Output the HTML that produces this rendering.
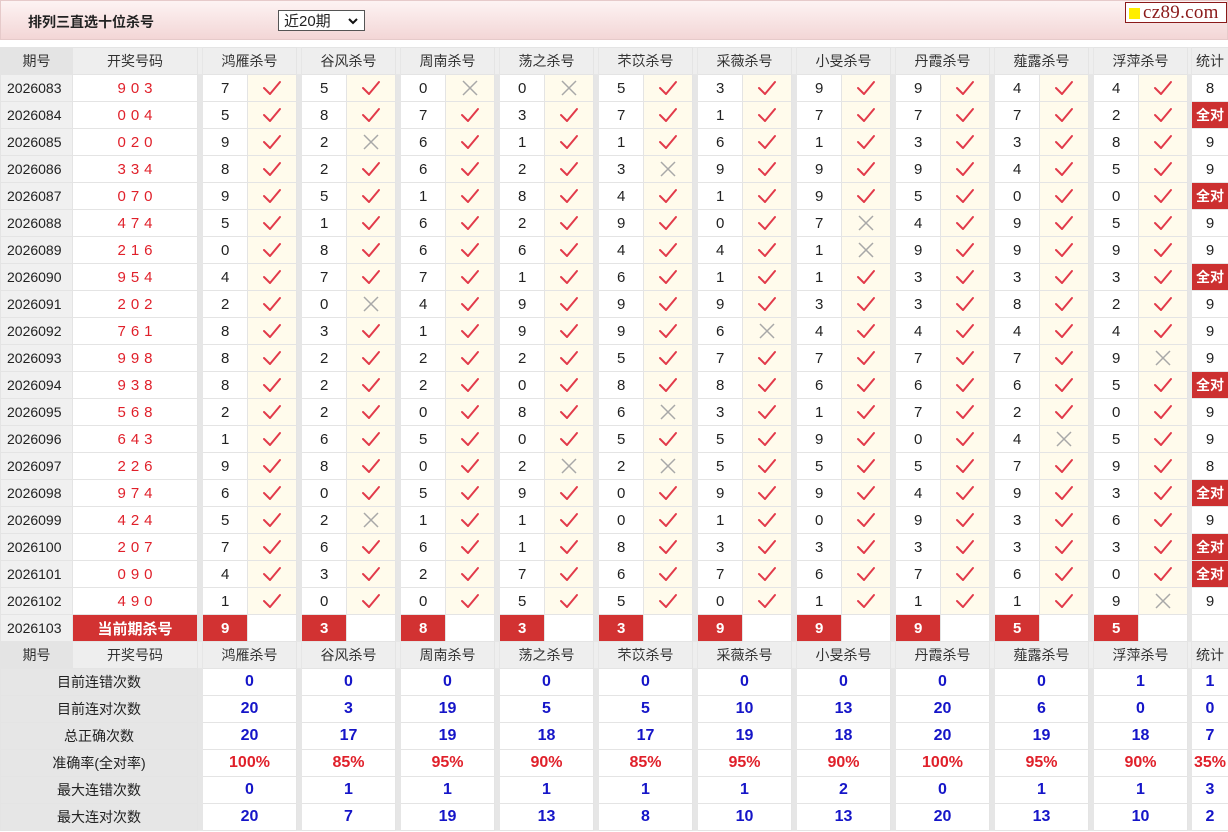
<!DOCTYPE html>
<html><head><meta charset="utf-8">
<style>
body{margin:0;width:1228px;height:832px;background:#fff;font-family:"Liberation Sans","Noto Sans CJK SC",sans-serif;font-size:15px;color:#222;overflow:hidden;position:relative}
.top{position:absolute;left:0;top:0;width:1226px;height:38px;border:1px solid #e6caca;background:linear-gradient(#fdf3f3,#f3d6d6)}
.title{position:absolute;left:27px;top:11px;font-weight:bold;font-size:14px;color:#222}
.sel{position:absolute;left:277px;top:9px;width:87px;height:21px;border:1px solid #555;background:#fff;font-size:15px;line-height:21px;box-sizing:border-box;padding-left:5px}
.sel svg{position:absolute;right:5px;top:6px}
.logo{position:absolute;left:1124px;top:1px;width:102px;height:21px;border:1px solid #8b1a1a;background:#fff;font-family:"Liberation Serif",serif;font-size:19px;color:#8b1a1a;line-height:20px;box-sizing:border-box;letter-spacing:0.3px}
.logo i{display:inline-block;width:11px;height:11px;background:#ffee00;margin:0 3px 0 3px;vertical-align:-1px}
table{position:absolute;left:0;top:47px;border-collapse:collapse;table-layout:fixed;width:1228px}
td{border:1px solid #e4e4e4;height:26px;padding:0;text-align:center;white-space:nowrap;overflow:hidden}
tr.h td{background:#eeeeee;color:#333;font-size:14px}
tr.h td.q{background:#e4e4e4}
td.b{background:#e6e6e6;border-color:#e6e6e6}
td.q{background:#f0f0f0;text-align:left;padding-left:6px;font-size:14px}
td.d{color:#e0202a;letter-spacing:5px;padding-left:5px}
td.n{text-align:left;padding-left:18px}
td.c{background:#fffbec}
td.c svg{display:block;margin:0 auto}
td.a{background:#cc3030;color:#fff;font-weight:bold;font-size:14px}
td.r{background:#d23232;color:#fff;font-weight:bold}
td.l{background:#e6e6e6;color:#222;font-size:14px}
td.v{color:#1515c8;font-weight:bold;font-size:16px}
td.p{color:#e0202a;font-weight:bold;font-size:16px}
</style></head><body>
<svg width="0" height="0" style="position:absolute">
<defs>
<symbol id="y" viewBox="0 0 20 18"><path d="M2 9 L8 15 L18 3" fill="none" stroke="#e23a4a" stroke-width="2" stroke-linecap="round" stroke-linejoin="round"/></symbol>
<symbol id="x" viewBox="0 0 20 18"><path d="M3 2 L17 16 M17 2 L3 16" fill="none" stroke="#a8a8a8" stroke-width="1.5"/></symbol>
</defs></svg>
<div class="top"><div class="title">排列三直选十位杀号</div>
<div class="sel">近20期<svg width="12" height="9" viewBox="0 0 12 9"><path d="M2 2 L6 6 L10 2" fill="none" stroke="#111" stroke-width="2"/></svg></div>
<div class="logo"><i></i>cz89.com</div></div>
<table>
<colgroup><col style="width:72px"><col style="width:125px">
<col style="width:5px"><col style="width:45px"><col style="width:49px">
<col style="width:5px"><col style="width:45px"><col style="width:49px">
<col style="width:5px"><col style="width:45px"><col style="width:49px">
<col style="width:5px"><col style="width:45px"><col style="width:49px">
<col style="width:5px"><col style="width:45px"><col style="width:49px">
<col style="width:5px"><col style="width:45px"><col style="width:49px">
<col style="width:5px"><col style="width:45px"><col style="width:49px">
<col style="width:5px"><col style="width:45px"><col style="width:49px">
<col style="width:5px"><col style="width:45px"><col style="width:49px">
<col style="width:5px"><col style="width:45px"><col style="width:49px">
<col style="width:4px"><col style="width:37px"></colgroup>
<tr class="h"><td class="q" style="text-align:center;padding:0">期号</td><td>开奖号码</td><td class="b"></td><td colspan="2">鸿雁杀号</td><td class="b"></td><td colspan="2">谷风杀号</td><td class="b"></td><td colspan="2">周南杀号</td><td class="b"></td><td colspan="2">荡之杀号</td><td class="b"></td><td colspan="2">芣苡杀号</td><td class="b"></td><td colspan="2">采薇杀号</td><td class="b"></td><td colspan="2">小旻杀号</td><td class="b"></td><td colspan="2">丹霞杀号</td><td class="b"></td><td colspan="2">薤露杀号</td><td class="b"></td><td colspan="2">浮萍杀号</td><td class="b"></td><td>统计</td></tr>
<tr><td class="q">2026083</td><td class="d">903</td><td class="b"></td><td class="n">7</td><td class="c"><svg width="20" height="18"><use href="#y"/></svg></td><td class="b"></td><td class="n">5</td><td class="c"><svg width="20" height="18"><use href="#y"/></svg></td><td class="b"></td><td class="n">0</td><td class="c"><svg width="20" height="18"><use href="#x"/></svg></td><td class="b"></td><td class="n">0</td><td class="c"><svg width="20" height="18"><use href="#x"/></svg></td><td class="b"></td><td class="n">5</td><td class="c"><svg width="20" height="18"><use href="#y"/></svg></td><td class="b"></td><td class="n">3</td><td class="c"><svg width="20" height="18"><use href="#y"/></svg></td><td class="b"></td><td class="n">9</td><td class="c"><svg width="20" height="18"><use href="#y"/></svg></td><td class="b"></td><td class="n">9</td><td class="c"><svg width="20" height="18"><use href="#y"/></svg></td><td class="b"></td><td class="n">4</td><td class="c"><svg width="20" height="18"><use href="#y"/></svg></td><td class="b"></td><td class="n">4</td><td class="c"><svg width="20" height="18"><use href="#y"/></svg></td><td class="b"></td><td>8</td></tr>
<tr><td class="q">2026084</td><td class="d">004</td><td class="b"></td><td class="n">5</td><td class="c"><svg width="20" height="18"><use href="#y"/></svg></td><td class="b"></td><td class="n">8</td><td class="c"><svg width="20" height="18"><use href="#y"/></svg></td><td class="b"></td><td class="n">7</td><td class="c"><svg width="20" height="18"><use href="#y"/></svg></td><td class="b"></td><td class="n">3</td><td class="c"><svg width="20" height="18"><use href="#y"/></svg></td><td class="b"></td><td class="n">7</td><td class="c"><svg width="20" height="18"><use href="#y"/></svg></td><td class="b"></td><td class="n">1</td><td class="c"><svg width="20" height="18"><use href="#y"/></svg></td><td class="b"></td><td class="n">7</td><td class="c"><svg width="20" height="18"><use href="#y"/></svg></td><td class="b"></td><td class="n">7</td><td class="c"><svg width="20" height="18"><use href="#y"/></svg></td><td class="b"></td><td class="n">7</td><td class="c"><svg width="20" height="18"><use href="#y"/></svg></td><td class="b"></td><td class="n">2</td><td class="c"><svg width="20" height="18"><use href="#y"/></svg></td><td class="b"></td><td class="a">全对</td></tr>
<tr><td class="q">2026085</td><td class="d">020</td><td class="b"></td><td class="n">9</td><td class="c"><svg width="20" height="18"><use href="#y"/></svg></td><td class="b"></td><td class="n">2</td><td class="c"><svg width="20" height="18"><use href="#x"/></svg></td><td class="b"></td><td class="n">6</td><td class="c"><svg width="20" height="18"><use href="#y"/></svg></td><td class="b"></td><td class="n">1</td><td class="c"><svg width="20" height="18"><use href="#y"/></svg></td><td class="b"></td><td class="n">1</td><td class="c"><svg width="20" height="18"><use href="#y"/></svg></td><td class="b"></td><td class="n">6</td><td class="c"><svg width="20" height="18"><use href="#y"/></svg></td><td class="b"></td><td class="n">1</td><td class="c"><svg width="20" height="18"><use href="#y"/></svg></td><td class="b"></td><td class="n">3</td><td class="c"><svg width="20" height="18"><use href="#y"/></svg></td><td class="b"></td><td class="n">3</td><td class="c"><svg width="20" height="18"><use href="#y"/></svg></td><td class="b"></td><td class="n">8</td><td class="c"><svg width="20" height="18"><use href="#y"/></svg></td><td class="b"></td><td>9</td></tr>
<tr><td class="q">2026086</td><td class="d">334</td><td class="b"></td><td class="n">8</td><td class="c"><svg width="20" height="18"><use href="#y"/></svg></td><td class="b"></td><td class="n">2</td><td class="c"><svg width="20" height="18"><use href="#y"/></svg></td><td class="b"></td><td class="n">6</td><td class="c"><svg width="20" height="18"><use href="#y"/></svg></td><td class="b"></td><td class="n">2</td><td class="c"><svg width="20" height="18"><use href="#y"/></svg></td><td class="b"></td><td class="n">3</td><td class="c"><svg width="20" height="18"><use href="#x"/></svg></td><td class="b"></td><td class="n">9</td><td class="c"><svg width="20" height="18"><use href="#y"/></svg></td><td class="b"></td><td class="n">9</td><td class="c"><svg width="20" height="18"><use href="#y"/></svg></td><td class="b"></td><td class="n">9</td><td class="c"><svg width="20" height="18"><use href="#y"/></svg></td><td class="b"></td><td class="n">4</td><td class="c"><svg width="20" height="18"><use href="#y"/></svg></td><td class="b"></td><td class="n">5</td><td class="c"><svg width="20" height="18"><use href="#y"/></svg></td><td class="b"></td><td>9</td></tr>
<tr><td class="q">2026087</td><td class="d">070</td><td class="b"></td><td class="n">9</td><td class="c"><svg width="20" height="18"><use href="#y"/></svg></td><td class="b"></td><td class="n">5</td><td class="c"><svg width="20" height="18"><use href="#y"/></svg></td><td class="b"></td><td class="n">1</td><td class="c"><svg width="20" height="18"><use href="#y"/></svg></td><td class="b"></td><td class="n">8</td><td class="c"><svg width="20" height="18"><use href="#y"/></svg></td><td class="b"></td><td class="n">4</td><td class="c"><svg width="20" height="18"><use href="#y"/></svg></td><td class="b"></td><td class="n">1</td><td class="c"><svg width="20" height="18"><use href="#y"/></svg></td><td class="b"></td><td class="n">9</td><td class="c"><svg width="20" height="18"><use href="#y"/></svg></td><td class="b"></td><td class="n">5</td><td class="c"><svg width="20" height="18"><use href="#y"/></svg></td><td class="b"></td><td class="n">0</td><td class="c"><svg width="20" height="18"><use href="#y"/></svg></td><td class="b"></td><td class="n">0</td><td class="c"><svg width="20" height="18"><use href="#y"/></svg></td><td class="b"></td><td class="a">全对</td></tr>
<tr><td class="q">2026088</td><td class="d">474</td><td class="b"></td><td class="n">5</td><td class="c"><svg width="20" height="18"><use href="#y"/></svg></td><td class="b"></td><td class="n">1</td><td class="c"><svg width="20" height="18"><use href="#y"/></svg></td><td class="b"></td><td class="n">6</td><td class="c"><svg width="20" height="18"><use href="#y"/></svg></td><td class="b"></td><td class="n">2</td><td class="c"><svg width="20" height="18"><use href="#y"/></svg></td><td class="b"></td><td class="n">9</td><td class="c"><svg width="20" height="18"><use href="#y"/></svg></td><td class="b"></td><td class="n">0</td><td class="c"><svg width="20" height="18"><use href="#y"/></svg></td><td class="b"></td><td class="n">7</td><td class="c"><svg width="20" height="18"><use href="#x"/></svg></td><td class="b"></td><td class="n">4</td><td class="c"><svg width="20" height="18"><use href="#y"/></svg></td><td class="b"></td><td class="n">9</td><td class="c"><svg width="20" height="18"><use href="#y"/></svg></td><td class="b"></td><td class="n">5</td><td class="c"><svg width="20" height="18"><use href="#y"/></svg></td><td class="b"></td><td>9</td></tr>
<tr><td class="q">2026089</td><td class="d">216</td><td class="b"></td><td class="n">0</td><td class="c"><svg width="20" height="18"><use href="#y"/></svg></td><td class="b"></td><td class="n">8</td><td class="c"><svg width="20" height="18"><use href="#y"/></svg></td><td class="b"></td><td class="n">6</td><td class="c"><svg width="20" height="18"><use href="#y"/></svg></td><td class="b"></td><td class="n">6</td><td class="c"><svg width="20" height="18"><use href="#y"/></svg></td><td class="b"></td><td class="n">4</td><td class="c"><svg width="20" height="18"><use href="#y"/></svg></td><td class="b"></td><td class="n">4</td><td class="c"><svg width="20" height="18"><use href="#y"/></svg></td><td class="b"></td><td class="n">1</td><td class="c"><svg width="20" height="18"><use href="#x"/></svg></td><td class="b"></td><td class="n">9</td><td class="c"><svg width="20" height="18"><use href="#y"/></svg></td><td class="b"></td><td class="n">9</td><td class="c"><svg width="20" height="18"><use href="#y"/></svg></td><td class="b"></td><td class="n">9</td><td class="c"><svg width="20" height="18"><use href="#y"/></svg></td><td class="b"></td><td>9</td></tr>
<tr><td class="q">2026090</td><td class="d">954</td><td class="b"></td><td class="n">4</td><td class="c"><svg width="20" height="18"><use href="#y"/></svg></td><td class="b"></td><td class="n">7</td><td class="c"><svg width="20" height="18"><use href="#y"/></svg></td><td class="b"></td><td class="n">7</td><td class="c"><svg width="20" height="18"><use href="#y"/></svg></td><td class="b"></td><td class="n">1</td><td class="c"><svg width="20" height="18"><use href="#y"/></svg></td><td class="b"></td><td class="n">6</td><td class="c"><svg width="20" height="18"><use href="#y"/></svg></td><td class="b"></td><td class="n">1</td><td class="c"><svg width="20" height="18"><use href="#y"/></svg></td><td class="b"></td><td class="n">1</td><td class="c"><svg width="20" height="18"><use href="#y"/></svg></td><td class="b"></td><td class="n">3</td><td class="c"><svg width="20" height="18"><use href="#y"/></svg></td><td class="b"></td><td class="n">3</td><td class="c"><svg width="20" height="18"><use href="#y"/></svg></td><td class="b"></td><td class="n">3</td><td class="c"><svg width="20" height="18"><use href="#y"/></svg></td><td class="b"></td><td class="a">全对</td></tr>
<tr><td class="q">2026091</td><td class="d">202</td><td class="b"></td><td class="n">2</td><td class="c"><svg width="20" height="18"><use href="#y"/></svg></td><td class="b"></td><td class="n">0</td><td class="c"><svg width="20" height="18"><use href="#x"/></svg></td><td class="b"></td><td class="n">4</td><td class="c"><svg width="20" height="18"><use href="#y"/></svg></td><td class="b"></td><td class="n">9</td><td class="c"><svg width="20" height="18"><use href="#y"/></svg></td><td class="b"></td><td class="n">9</td><td class="c"><svg width="20" height="18"><use href="#y"/></svg></td><td class="b"></td><td class="n">9</td><td class="c"><svg width="20" height="18"><use href="#y"/></svg></td><td class="b"></td><td class="n">3</td><td class="c"><svg width="20" height="18"><use href="#y"/></svg></td><td class="b"></td><td class="n">3</td><td class="c"><svg width="20" height="18"><use href="#y"/></svg></td><td class="b"></td><td class="n">8</td><td class="c"><svg width="20" height="18"><use href="#y"/></svg></td><td class="b"></td><td class="n">2</td><td class="c"><svg width="20" height="18"><use href="#y"/></svg></td><td class="b"></td><td>9</td></tr>
<tr><td class="q">2026092</td><td class="d">761</td><td class="b"></td><td class="n">8</td><td class="c"><svg width="20" height="18"><use href="#y"/></svg></td><td class="b"></td><td class="n">3</td><td class="c"><svg width="20" height="18"><use href="#y"/></svg></td><td class="b"></td><td class="n">1</td><td class="c"><svg width="20" height="18"><use href="#y"/></svg></td><td class="b"></td><td class="n">9</td><td class="c"><svg width="20" height="18"><use href="#y"/></svg></td><td class="b"></td><td class="n">9</td><td class="c"><svg width="20" height="18"><use href="#y"/></svg></td><td class="b"></td><td class="n">6</td><td class="c"><svg width="20" height="18"><use href="#x"/></svg></td><td class="b"></td><td class="n">4</td><td class="c"><svg width="20" height="18"><use href="#y"/></svg></td><td class="b"></td><td class="n">4</td><td class="c"><svg width="20" height="18"><use href="#y"/></svg></td><td class="b"></td><td class="n">4</td><td class="c"><svg width="20" height="18"><use href="#y"/></svg></td><td class="b"></td><td class="n">4</td><td class="c"><svg width="20" height="18"><use href="#y"/></svg></td><td class="b"></td><td>9</td></tr>
<tr><td class="q">2026093</td><td class="d">998</td><td class="b"></td><td class="n">8</td><td class="c"><svg width="20" height="18"><use href="#y"/></svg></td><td class="b"></td><td class="n">2</td><td class="c"><svg width="20" height="18"><use href="#y"/></svg></td><td class="b"></td><td class="n">2</td><td class="c"><svg width="20" height="18"><use href="#y"/></svg></td><td class="b"></td><td class="n">2</td><td class="c"><svg width="20" height="18"><use href="#y"/></svg></td><td class="b"></td><td class="n">5</td><td class="c"><svg width="20" height="18"><use href="#y"/></svg></td><td class="b"></td><td class="n">7</td><td class="c"><svg width="20" height="18"><use href="#y"/></svg></td><td class="b"></td><td class="n">7</td><td class="c"><svg width="20" height="18"><use href="#y"/></svg></td><td class="b"></td><td class="n">7</td><td class="c"><svg width="20" height="18"><use href="#y"/></svg></td><td class="b"></td><td class="n">7</td><td class="c"><svg width="20" height="18"><use href="#y"/></svg></td><td class="b"></td><td class="n">9</td><td class="c"><svg width="20" height="18"><use href="#x"/></svg></td><td class="b"></td><td>9</td></tr>
<tr><td class="q">2026094</td><td class="d">938</td><td class="b"></td><td class="n">8</td><td class="c"><svg width="20" height="18"><use href="#y"/></svg></td><td class="b"></td><td class="n">2</td><td class="c"><svg width="20" height="18"><use href="#y"/></svg></td><td class="b"></td><td class="n">2</td><td class="c"><svg width="20" height="18"><use href="#y"/></svg></td><td class="b"></td><td class="n">0</td><td class="c"><svg width="20" height="18"><use href="#y"/></svg></td><td class="b"></td><td class="n">8</td><td class="c"><svg width="20" height="18"><use href="#y"/></svg></td><td class="b"></td><td class="n">8</td><td class="c"><svg width="20" height="18"><use href="#y"/></svg></td><td class="b"></td><td class="n">6</td><td class="c"><svg width="20" height="18"><use href="#y"/></svg></td><td class="b"></td><td class="n">6</td><td class="c"><svg width="20" height="18"><use href="#y"/></svg></td><td class="b"></td><td class="n">6</td><td class="c"><svg width="20" height="18"><use href="#y"/></svg></td><td class="b"></td><td class="n">5</td><td class="c"><svg width="20" height="18"><use href="#y"/></svg></td><td class="b"></td><td class="a">全对</td></tr>
<tr><td class="q">2026095</td><td class="d">568</td><td class="b"></td><td class="n">2</td><td class="c"><svg width="20" height="18"><use href="#y"/></svg></td><td class="b"></td><td class="n">2</td><td class="c"><svg width="20" height="18"><use href="#y"/></svg></td><td class="b"></td><td class="n">0</td><td class="c"><svg width="20" height="18"><use href="#y"/></svg></td><td class="b"></td><td class="n">8</td><td class="c"><svg width="20" height="18"><use href="#y"/></svg></td><td class="b"></td><td class="n">6</td><td class="c"><svg width="20" height="18"><use href="#x"/></svg></td><td class="b"></td><td class="n">3</td><td class="c"><svg width="20" height="18"><use href="#y"/></svg></td><td class="b"></td><td class="n">1</td><td class="c"><svg width="20" height="18"><use href="#y"/></svg></td><td class="b"></td><td class="n">7</td><td class="c"><svg width="20" height="18"><use href="#y"/></svg></td><td class="b"></td><td class="n">2</td><td class="c"><svg width="20" height="18"><use href="#y"/></svg></td><td class="b"></td><td class="n">0</td><td class="c"><svg width="20" height="18"><use href="#y"/></svg></td><td class="b"></td><td>9</td></tr>
<tr><td class="q">2026096</td><td class="d">643</td><td class="b"></td><td class="n">1</td><td class="c"><svg width="20" height="18"><use href="#y"/></svg></td><td class="b"></td><td class="n">6</td><td class="c"><svg width="20" height="18"><use href="#y"/></svg></td><td class="b"></td><td class="n">5</td><td class="c"><svg width="20" height="18"><use href="#y"/></svg></td><td class="b"></td><td class="n">0</td><td class="c"><svg width="20" height="18"><use href="#y"/></svg></td><td class="b"></td><td class="n">5</td><td class="c"><svg width="20" height="18"><use href="#y"/></svg></td><td class="b"></td><td class="n">5</td><td class="c"><svg width="20" height="18"><use href="#y"/></svg></td><td class="b"></td><td class="n">9</td><td class="c"><svg width="20" height="18"><use href="#y"/></svg></td><td class="b"></td><td class="n">0</td><td class="c"><svg width="20" height="18"><use href="#y"/></svg></td><td class="b"></td><td class="n">4</td><td class="c"><svg width="20" height="18"><use href="#x"/></svg></td><td class="b"></td><td class="n">5</td><td class="c"><svg width="20" height="18"><use href="#y"/></svg></td><td class="b"></td><td>9</td></tr>
<tr><td class="q">2026097</td><td class="d">226</td><td class="b"></td><td class="n">9</td><td class="c"><svg width="20" height="18"><use href="#y"/></svg></td><td class="b"></td><td class="n">8</td><td class="c"><svg width="20" height="18"><use href="#y"/></svg></td><td class="b"></td><td class="n">0</td><td class="c"><svg width="20" height="18"><use href="#y"/></svg></td><td class="b"></td><td class="n">2</td><td class="c"><svg width="20" height="18"><use href="#x"/></svg></td><td class="b"></td><td class="n">2</td><td class="c"><svg width="20" height="18"><use href="#x"/></svg></td><td class="b"></td><td class="n">5</td><td class="c"><svg width="20" height="18"><use href="#y"/></svg></td><td class="b"></td><td class="n">5</td><td class="c"><svg width="20" height="18"><use href="#y"/></svg></td><td class="b"></td><td class="n">5</td><td class="c"><svg width="20" height="18"><use href="#y"/></svg></td><td class="b"></td><td class="n">7</td><td class="c"><svg width="20" height="18"><use href="#y"/></svg></td><td class="b"></td><td class="n">9</td><td class="c"><svg width="20" height="18"><use href="#y"/></svg></td><td class="b"></td><td>8</td></tr>
<tr><td class="q">2026098</td><td class="d">974</td><td class="b"></td><td class="n">6</td><td class="c"><svg width="20" height="18"><use href="#y"/></svg></td><td class="b"></td><td class="n">0</td><td class="c"><svg width="20" height="18"><use href="#y"/></svg></td><td class="b"></td><td class="n">5</td><td class="c"><svg width="20" height="18"><use href="#y"/></svg></td><td class="b"></td><td class="n">9</td><td class="c"><svg width="20" height="18"><use href="#y"/></svg></td><td class="b"></td><td class="n">0</td><td class="c"><svg width="20" height="18"><use href="#y"/></svg></td><td class="b"></td><td class="n">9</td><td class="c"><svg width="20" height="18"><use href="#y"/></svg></td><td class="b"></td><td class="n">9</td><td class="c"><svg width="20" height="18"><use href="#y"/></svg></td><td class="b"></td><td class="n">4</td><td class="c"><svg width="20" height="18"><use href="#y"/></svg></td><td class="b"></td><td class="n">9</td><td class="c"><svg width="20" height="18"><use href="#y"/></svg></td><td class="b"></td><td class="n">3</td><td class="c"><svg width="20" height="18"><use href="#y"/></svg></td><td class="b"></td><td class="a">全对</td></tr>
<tr><td class="q">2026099</td><td class="d">424</td><td class="b"></td><td class="n">5</td><td class="c"><svg width="20" height="18"><use href="#y"/></svg></td><td class="b"></td><td class="n">2</td><td class="c"><svg width="20" height="18"><use href="#x"/></svg></td><td class="b"></td><td class="n">1</td><td class="c"><svg width="20" height="18"><use href="#y"/></svg></td><td class="b"></td><td class="n">1</td><td class="c"><svg width="20" height="18"><use href="#y"/></svg></td><td class="b"></td><td class="n">0</td><td class="c"><svg width="20" height="18"><use href="#y"/></svg></td><td class="b"></td><td class="n">1</td><td class="c"><svg width="20" height="18"><use href="#y"/></svg></td><td class="b"></td><td class="n">0</td><td class="c"><svg width="20" height="18"><use href="#y"/></svg></td><td class="b"></td><td class="n">9</td><td class="c"><svg width="20" height="18"><use href="#y"/></svg></td><td class="b"></td><td class="n">3</td><td class="c"><svg width="20" height="18"><use href="#y"/></svg></td><td class="b"></td><td class="n">6</td><td class="c"><svg width="20" height="18"><use href="#y"/></svg></td><td class="b"></td><td>9</td></tr>
<tr><td class="q">2026100</td><td class="d">207</td><td class="b"></td><td class="n">7</td><td class="c"><svg width="20" height="18"><use href="#y"/></svg></td><td class="b"></td><td class="n">6</td><td class="c"><svg width="20" height="18"><use href="#y"/></svg></td><td class="b"></td><td class="n">6</td><td class="c"><svg width="20" height="18"><use href="#y"/></svg></td><td class="b"></td><td class="n">1</td><td class="c"><svg width="20" height="18"><use href="#y"/></svg></td><td class="b"></td><td class="n">8</td><td class="c"><svg width="20" height="18"><use href="#y"/></svg></td><td class="b"></td><td class="n">3</td><td class="c"><svg width="20" height="18"><use href="#y"/></svg></td><td class="b"></td><td class="n">3</td><td class="c"><svg width="20" height="18"><use href="#y"/></svg></td><td class="b"></td><td class="n">3</td><td class="c"><svg width="20" height="18"><use href="#y"/></svg></td><td class="b"></td><td class="n">3</td><td class="c"><svg width="20" height="18"><use href="#y"/></svg></td><td class="b"></td><td class="n">3</td><td class="c"><svg width="20" height="18"><use href="#y"/></svg></td><td class="b"></td><td class="a">全对</td></tr>
<tr><td class="q">2026101</td><td class="d">090</td><td class="b"></td><td class="n">4</td><td class="c"><svg width="20" height="18"><use href="#y"/></svg></td><td class="b"></td><td class="n">3</td><td class="c"><svg width="20" height="18"><use href="#y"/></svg></td><td class="b"></td><td class="n">2</td><td class="c"><svg width="20" height="18"><use href="#y"/></svg></td><td class="b"></td><td class="n">7</td><td class="c"><svg width="20" height="18"><use href="#y"/></svg></td><td class="b"></td><td class="n">6</td><td class="c"><svg width="20" height="18"><use href="#y"/></svg></td><td class="b"></td><td class="n">7</td><td class="c"><svg width="20" height="18"><use href="#y"/></svg></td><td class="b"></td><td class="n">6</td><td class="c"><svg width="20" height="18"><use href="#y"/></svg></td><td class="b"></td><td class="n">7</td><td class="c"><svg width="20" height="18"><use href="#y"/></svg></td><td class="b"></td><td class="n">6</td><td class="c"><svg width="20" height="18"><use href="#y"/></svg></td><td class="b"></td><td class="n">0</td><td class="c"><svg width="20" height="18"><use href="#y"/></svg></td><td class="b"></td><td class="a">全对</td></tr>
<tr><td class="q">2026102</td><td class="d">490</td><td class="b"></td><td class="n">1</td><td class="c"><svg width="20" height="18"><use href="#y"/></svg></td><td class="b"></td><td class="n">0</td><td class="c"><svg width="20" height="18"><use href="#y"/></svg></td><td class="b"></td><td class="n">0</td><td class="c"><svg width="20" height="18"><use href="#y"/></svg></td><td class="b"></td><td class="n">5</td><td class="c"><svg width="20" height="18"><use href="#y"/></svg></td><td class="b"></td><td class="n">5</td><td class="c"><svg width="20" height="18"><use href="#y"/></svg></td><td class="b"></td><td class="n">0</td><td class="c"><svg width="20" height="18"><use href="#y"/></svg></td><td class="b"></td><td class="n">1</td><td class="c"><svg width="20" height="18"><use href="#y"/></svg></td><td class="b"></td><td class="n">1</td><td class="c"><svg width="20" height="18"><use href="#y"/></svg></td><td class="b"></td><td class="n">1</td><td class="c"><svg width="20" height="18"><use href="#y"/></svg></td><td class="b"></td><td class="n">9</td><td class="c"><svg width="20" height="18"><use href="#x"/></svg></td><td class="b"></td><td>9</td></tr>
<tr><td class="q">2026103</td><td class="r">当前期杀号</td><td class="b"></td><td class="r n">9</td><td></td><td class="b"></td><td class="r n">3</td><td></td><td class="b"></td><td class="r n">8</td><td></td><td class="b"></td><td class="r n">3</td><td></td><td class="b"></td><td class="r n">3</td><td></td><td class="b"></td><td class="r n">9</td><td></td><td class="b"></td><td class="r n">9</td><td></td><td class="b"></td><td class="r n">9</td><td></td><td class="b"></td><td class="r n">5</td><td></td><td class="b"></td><td class="r n">5</td><td></td><td class="b"></td><td></td></tr>
<tr class="h"><td class="q" style="text-align:center;padding:0">期号</td><td>开奖号码</td><td class="b"></td><td colspan="2">鸿雁杀号</td><td class="b"></td><td colspan="2">谷风杀号</td><td class="b"></td><td colspan="2">周南杀号</td><td class="b"></td><td colspan="2">荡之杀号</td><td class="b"></td><td colspan="2">芣苡杀号</td><td class="b"></td><td colspan="2">采薇杀号</td><td class="b"></td><td colspan="2">小旻杀号</td><td class="b"></td><td colspan="2">丹霞杀号</td><td class="b"></td><td colspan="2">薤露杀号</td><td class="b"></td><td colspan="2">浮萍杀号</td><td class="b"></td><td>统计</td></tr>
<tr><td class="l" colspan="2">目前连错次数</td><td class="b"></td><td class="v" colspan="2">0</td><td class="b"></td><td class="v" colspan="2">0</td><td class="b"></td><td class="v" colspan="2">0</td><td class="b"></td><td class="v" colspan="2">0</td><td class="b"></td><td class="v" colspan="2">0</td><td class="b"></td><td class="v" colspan="2">0</td><td class="b"></td><td class="v" colspan="2">0</td><td class="b"></td><td class="v" colspan="2">0</td><td class="b"></td><td class="v" colspan="2">0</td><td class="b"></td><td class="v" colspan="2">1</td><td class="b"></td><td class="v">1</td></tr>
<tr><td class="l" colspan="2">目前连对次数</td><td class="b"></td><td class="v" colspan="2">20</td><td class="b"></td><td class="v" colspan="2">3</td><td class="b"></td><td class="v" colspan="2">19</td><td class="b"></td><td class="v" colspan="2">5</td><td class="b"></td><td class="v" colspan="2">5</td><td class="b"></td><td class="v" colspan="2">10</td><td class="b"></td><td class="v" colspan="2">13</td><td class="b"></td><td class="v" colspan="2">20</td><td class="b"></td><td class="v" colspan="2">6</td><td class="b"></td><td class="v" colspan="2">0</td><td class="b"></td><td class="v">0</td></tr>
<tr><td class="l" colspan="2">总正确次数</td><td class="b"></td><td class="v" colspan="2">20</td><td class="b"></td><td class="v" colspan="2">17</td><td class="b"></td><td class="v" colspan="2">19</td><td class="b"></td><td class="v" colspan="2">18</td><td class="b"></td><td class="v" colspan="2">17</td><td class="b"></td><td class="v" colspan="2">19</td><td class="b"></td><td class="v" colspan="2">18</td><td class="b"></td><td class="v" colspan="2">20</td><td class="b"></td><td class="v" colspan="2">19</td><td class="b"></td><td class="v" colspan="2">18</td><td class="b"></td><td class="v">7</td></tr>
<tr><td class="l" colspan="2">准确率(全对率)</td><td class="b"></td><td class="p" colspan="2">100%</td><td class="b"></td><td class="p" colspan="2">85%</td><td class="b"></td><td class="p" colspan="2">95%</td><td class="b"></td><td class="p" colspan="2">90%</td><td class="b"></td><td class="p" colspan="2">85%</td><td class="b"></td><td class="p" colspan="2">95%</td><td class="b"></td><td class="p" colspan="2">90%</td><td class="b"></td><td class="p" colspan="2">100%</td><td class="b"></td><td class="p" colspan="2">95%</td><td class="b"></td><td class="p" colspan="2">90%</td><td class="b"></td><td class="p">35%</td></tr>
<tr><td class="l" colspan="2">最大连错次数</td><td class="b"></td><td class="v" colspan="2">0</td><td class="b"></td><td class="v" colspan="2">1</td><td class="b"></td><td class="v" colspan="2">1</td><td class="b"></td><td class="v" colspan="2">1</td><td class="b"></td><td class="v" colspan="2">1</td><td class="b"></td><td class="v" colspan="2">1</td><td class="b"></td><td class="v" colspan="2">2</td><td class="b"></td><td class="v" colspan="2">0</td><td class="b"></td><td class="v" colspan="2">1</td><td class="b"></td><td class="v" colspan="2">1</td><td class="b"></td><td class="v">3</td></tr>
<tr><td class="l" colspan="2">最大连对次数</td><td class="b"></td><td class="v" colspan="2">20</td><td class="b"></td><td class="v" colspan="2">7</td><td class="b"></td><td class="v" colspan="2">19</td><td class="b"></td><td class="v" colspan="2">13</td><td class="b"></td><td class="v" colspan="2">8</td><td class="b"></td><td class="v" colspan="2">10</td><td class="b"></td><td class="v" colspan="2">13</td><td class="b"></td><td class="v" colspan="2">20</td><td class="b"></td><td class="v" colspan="2">13</td><td class="b"></td><td class="v" colspan="2">10</td><td class="b"></td><td class="v">2</td></tr>
</table>
</body></html>
